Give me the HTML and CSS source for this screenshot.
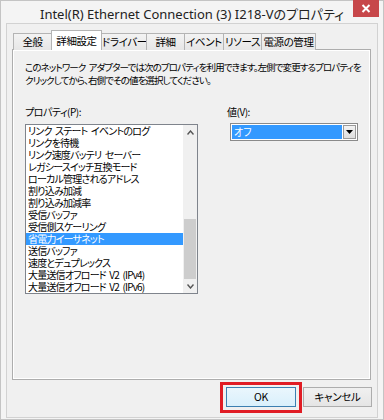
FILE: index.html
```html
<!DOCTYPE html>
<html lang="ja">
<head>
    <meta charset="UTF-8">
    <title>Intel(R) Ethernet Connection (3) I218-Vのプロパティ</title>
    <link rel="stylesheet" href="styles.css">
</head>
<body>
    <div class="window">
        <div class="titlebar">
            <span class="title">Intel(R) Ethernet Connection (3) I218-Vのプロパティ</span>
            <span class="close">
                <svg width="10" height="9" viewBox="0 0 10 9"><path d="M1.5 1 L8.5 8 M8.5 1 L1.5 8" stroke="#fff" stroke-width="2"/></svg>
            </span>
        </div>

        <div class="client">
            <div class="tabs">
                <div class="tab t1">全般</div>
                <div class="tab t2 active">詳細設定</div>
                <div class="tab t3">ドライバー</div>
                <div class="tab t4">詳細</div>
                <div class="tab t5">イベント</div>
                <div class="tab t6">リソース</div>
                <div class="tab t7">電源の管理</div>
            </div>

            <div class="panel">
                <p class="desc">このネットワーク アダプターでは次のプロパティを利用できます。左側で変更するプロパティを<br>クリックしてから、右側でその値を選択してください。</p>

                <div class="fields">
                    <div class="field prop">
                        <label>プロパティ(P):</label>
                        <div class="listbox">
                            <ul class="items">
                                <li>リンク ステート イベントのログ</li>
                                <li>リンクを待機</li>
                                <li>リンク速度バッテリ セーバー</li>
                                <li>レガシースイッチ互換モード</li>
                                <li>ローカル管理されるアドレス</li>
                                <li>割り込み加減</li>
                                <li>割り込み加減率</li>
                                <li>受信バッファ</li>
                                <li>受信側スケーリング</li>
                                <li class="selected">省電力イーサネット</li>
                                <li>送信バッファ</li>
                                <li>速度とデュプレックス</li>
                                <li>大量送信オフロード V2 (IPv4)</li>
                                <li>大量送信オフロード V2 (IPv6)</li>
                            </ul>
                            <div class="scrollbar">
                                <div class="arrow">
                                    <svg width="7" height="5" viewBox="0 0 7 5"><path d="M0.5 4.5 L3.5 1 L6.5 4.5" fill="none" stroke="#555" stroke-width="1.4"/></svg>
                                </div>
                                <div class="track"><div class="thumb"></div></div>
                                <div class="arrow">
                                    <svg width="7" height="5" viewBox="0 0 7 5"><path d="M0.5 0.5 L3.5 4 L6.5 0.5" fill="none" stroke="#555" stroke-width="1.4"/></svg>
                                </div>
                            </div>
                        </div>
                    </div>

                    <div class="field value">
                        <label>値(V):</label>
                        <div class="combo">
                            <span class="combo-text">オフ</span>
                            <span class="combo-btn">
                                <svg width="7" height="4" viewBox="0 0 7 4"><path d="M0 0 L7 0 L3.5 4 Z" fill="#000"/></svg>
                            </span>
                        </div>
                    </div>
                </div>
            </div>

            <div class="buttons">
                <button class="btn ok">OK<span class="mark"></span></button>
                <button class="btn cancel">キャンセル</button>
            </div>
        </div>
    </div>
</body>
</html>
```

FILE: styles.css
```css
body {
    margin: 0;
    padding: 0;
    background: #f2f2f2;
    font-family: "Noto Sans CJK JP", "Noto Sans", sans-serif;
    font-size: 10px;
    color: #000;
}

.window {
    width: 384px;
    height: 420px;
    box-sizing: border-box;
    border: 1px solid #c4c4c4;
    background: #f4f4f4;
    display: flex;
    flex-direction: column;
}

.titlebar {
    position: relative;
    height: 22px;
    text-align: center;
    flex: none;
}

.title {
    font-family: "Noto Sans", "Noto Sans CJK JP", sans-serif;
    font-size: 13px;
    line-height: 27px;
    color: #222;
    font-feature-settings: "palt";
}

.close {
    position: absolute;
    top: -1px;
    right: 4px;
    width: 26px;
    height: 17px;
    background: #c7474a;
    display: flex;
    align-items: center;
    justify-content: center;
}

.client {
    flex: 1;
    margin: 0 5px 1px 5px;
    border: 1px solid #d2d2d2;
    background: #f0f0f0;
    padding: 6px 6px 0 5px;
}

/* tabs */
.tabs {
    display: flex;
    align-items: flex-end;
    margin-left: 1px;
    margin-bottom: -1px;
    height: 20px;
    position: relative;
    z-index: 1;
}

.tab {
    height: 17px;
    box-sizing: border-box;
    border: 1px solid #b4b4b4;
    border-bottom: none;
    margin-right: -1px;
    background: linear-gradient(#f3f3f3, #e6e6e6);
    line-height: 16px;
    text-align: center;
    font-size: 10.5px;
    white-space: nowrap;
    font-feature-settings: "palt";
    letter-spacing: -0.4px;
}

.tab.active {
    height: 20px;
    background: #fff;
    line-height: 19px;
    position: relative;
    z-index: 2;
}

.t1 { width: 39px; }
.t2 { width: 51px; }
.t3 { width: 46px; }
.t4 { width: 39px; }
.t5 { width: 40px; }
.t6 { width: 39px; }
.t7 { width: 55px; }

/* tab page */
.panel {
    height: 331px;
    box-sizing: border-box;
    border: 1px solid #adadad;
    box-shadow: inset 1px 1px 0 #fff, inset -1px -1px 0 #fff;
    background: #f0f0f0;
    padding: 11px 12px 0 12px;
}

.desc {
    margin: 0;
    font-size: 9.5px;
    line-height: 13px;
    font-feature-settings: "palt";
    letter-spacing: -0.9px;
    word-spacing: 2px;
    white-space: nowrap;
}

.fields {
    display: flex;
    margin-top: 19px;
}

.field label {
    display: block;
    line-height: 12px;
    margin-bottom: 6px;
    font-feature-settings: "palt";
    letter-spacing: -0.5px;
}

.prop {
    width: 173px;
}

.value {
    margin-left: 29px;
}

/* list box */
.listbox {
    display: flex;
    border: 1px solid #7f848c;
    background: #fff;
}

.items {
    flex: 1;
    list-style: none;
    margin: 0;
    padding: 0;
}

.items li {
    height: 12px;
    line-height: 12px;
    padding-left: 2px;
    white-space: nowrap;
    font-feature-settings: "palt";
    letter-spacing: -0.8px;
    word-spacing: 2px;
}

.items li.selected {
    background: #3399ff;
    color: #fff;
}

.scrollbar {
    width: 14px;
    display: flex;
    flex-direction: column;
    background: #f0f0f0;
}

.arrow {
    height: 14px;
    display: flex;
    align-items: center;
    justify-content: center;
}

.track {
    flex: 1;
}

.thumb {
    margin-top: 80px;
    height: 60px;
    margin-left: 1px;
    margin-right: 1px;
    background: #cdcdcd;
}

/* combo box */
.combo {
    display: flex;
    width: 128px;
    height: 18px;
    box-sizing: border-box;
    margin-left: 3px;
    margin-top: -1px;
    border: 1px solid #8a8a8a;
    background: #fff;
    padding: 1px;
}

.combo-text {
    flex: 1;
    background: #3399ff;
    color: #fff;
    line-height: 14px;
    padding-left: 2px;
    font-feature-settings: "palt";
}

.combo-btn {
    width: 13px;
    margin-left: 1px;
    border: 1px solid #9a9a9a;
    box-sizing: border-box;
    background: linear-gradient(#f2f2f2, #dedede);
    display: flex;
    align-items: center;
    justify-content: center;
}

/* buttons */
.buttons {
    display: flex;
    justify-content: flex-end;
    gap: 7px;
    margin-top: 7px;
    margin-right: -1px;
}

.btn {
    position: relative;
    height: 20px;
    box-sizing: border-box;
    border: 1px solid #adadad;
    background: linear-gradient(#f0f0f0, #e5e5e5);
    font-family: "Noto Sans CJK JP", "Noto Sans", sans-serif;
    font-size: 10.5px;
    line-height: 18px;
    padding: 0;
    color: #000;
    font-feature-settings: "palt";
    letter-spacing: -0.3px;
}

.ok {
    width: 70px;
    border-color: #3c7fb1;
    background: linear-gradient(#eaf6fd, #d9f0fc);
}

.cancel {
    width: 69px;
}

.mark {
    position: absolute;
    left: -7px;
    top: -6px;
    right: -7px;
    bottom: -7px;
    border: 3px solid #e01c24;
}
```
